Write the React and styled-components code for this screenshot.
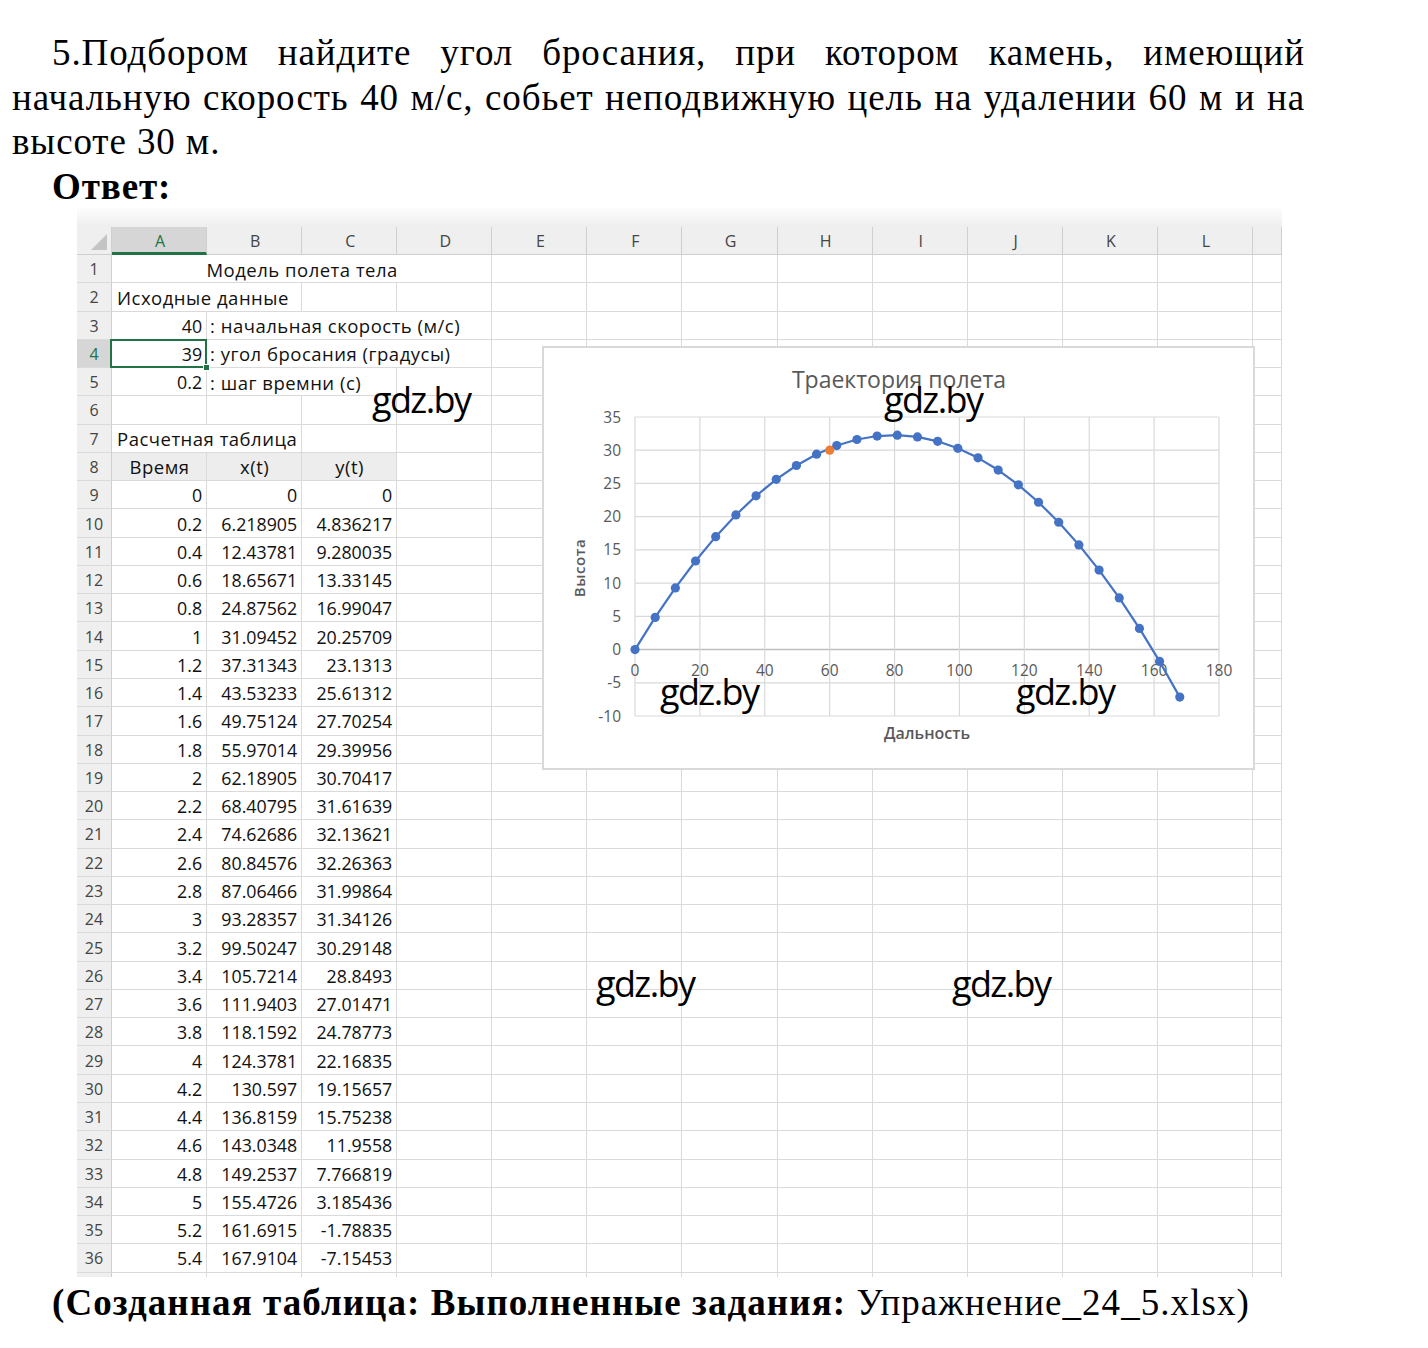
import React from "react";
import styled, { createGlobalStyle } from "styled-components";

const GlobalStyle = createGlobalStyle`
  body {
    margin: 0;
    background: #fff;
  }
`;

const DATA = [
  ["0", "0", "0"],
  ["0.2", "6.218905", "4.836217"],
  ["0.4", "12.43781", "9.280035"],
  ["0.6", "18.65671", "13.33145"],
  ["0.8", "24.87562", "16.99047"],
  ["1", "31.09452", "20.25709"],
  ["1.2", "37.31343", "23.1313"],
  ["1.4", "43.53233", "25.61312"],
  ["1.6", "49.75124", "27.70254"],
  ["1.8", "55.97014", "29.39956"],
  ["2", "62.18905", "30.70417"],
  ["2.2", "68.40795", "31.61639"],
  ["2.4", "74.62686", "32.13621"],
  ["2.6", "80.84576", "32.26363"],
  ["2.8", "87.06466", "31.99864"],
  ["3", "93.28357", "31.34126"],
  ["3.2", "99.50247", "30.29148"],
  ["3.4", "105.7214", "28.8493"],
  ["3.6", "111.9403", "27.01471"],
  ["3.8", "118.1592", "24.78773"],
  ["4", "124.3781", "22.16835"],
  ["4.2", "130.597", "19.15657"],
  ["4.4", "136.8159", "15.75238"],
  ["4.6", "143.0348", "11.9558"],
  ["4.8", "149.2537", "7.766819"],
  ["5", "155.4726", "3.185436"],
  ["5.2", "161.6915", "-1.78835"],
  ["5.4", "167.9104", "-7.15453"],
];

const LETTERS = ["A", "B", "C", "D", "E", "F", "G", "H", "I", "J", "K", "L", ""];

const TOP_ROWS = [
  [{ span: 4, text: "Модель полета тела", align: "center", words: true }],
  [{ span: 2, text: "Исходные данные", words: true }],
  [{ text: "40", align: "right" }, { span: 3, text: ": начальная скорость (м/с)", tight: true, words: true }],
  [{ text: "39", align: "right", selected: true }, { span: 3, text: ": угол бросания (градусы)", tight: true, words: true }],
  [{ text: "0.2", align: "right" }, { span: 2, text: ": шаг времни (с)", tight: true, words: true }],
  [],
  [{ span: 2, text: "Расчетная таблица", words: true }],
  [
    { text: "Время", align: "center", fill: true, words: true },
    { text: "x(t)", align: "center", fill: true, words: true },
    { text: "y(t)", align: "center", fill: true, words: true },
  ],
];

const ROWS = [
  ...TOP_ROWS,
  ...DATA.map((d) => d.map((v) => ({ text: v, align: "right" }))),
];

// watermark positions inside the sheet
const MARKS = [
  { left: 295, top: 181 },
  { left: 807, top: 181 },
  { left: 583, top: 473 },
  { left: 939, top: 473 },
  { left: 519, top: 765 },
  { left: 875, top: 765 },
];

const Page = styled.div`
  width: 1428px;
  min-height: 1348px;
  padding-top: 31px;
  box-sizing: border-box;
  font-family: "Liberation Serif", "Times New Roman", serif;
  color: #000;
`;

const Task = styled.div`
  width: 1293px;
  margin-left: 12px;
  font-size: 37px;
  line-height: 44.5px;
  letter-spacing: 0.9px;
`;

const Line = styled.div`
  text-align: ${(p) => (p.$justify ? "justify" : "left")};
  text-align-last: ${(p) => (p.$justify ? "justify" : "auto")};
  padding-left: ${(p) => (p.$indent ? "40px" : "0")};
`;

const Answer = styled.div`
  height: 43.5px;
  margin-left: 52px;
  font-size: 37px;
  line-height: 44.5px;
  letter-spacing: 0.9px;
  font-weight: bold;
`;

const SheetWrap = styled.div`
  position: relative;
  width: 1205px;
  margin-left: 77px;
`;

const Grid = styled.div`
  display: grid;
  grid-template-columns: 35px repeat(12, 95.08px) 29px;
  grid-template-rows: 19px 28px repeat(36, 28.28px) 4px;
  font-family: "Open Sans", "Liberation Sans", sans-serif;
  color: #111;
`;

const Band = styled.div`
  grid-column: 1 / -1;
  background: linear-gradient(#fdfdfd, #eeeeee);
`;

const Corner = styled.div`
  position: relative;
  background: #efefef;
  border-right: 1px solid #cfcfcf;
  border-bottom: 1px solid #cfcfcf;

  &::after {
    content: "";
    position: absolute;
    right: 4px;
    bottom: 4px;
    width: 16px;
    height: 16px;
    background: #c4c4c4;
    clip-path: polygon(100% 0, 100% 100%, 0 100%);
  }
`;

const ColHead = styled.div`
  display: flex;
  align-items: center;
  justify-content: center;
  background: ${(p) => (p.$active ? "#d6d6d6" : "#efefef")};
  border-right: 1px solid #cfcfcf;
  border-bottom: ${(p) => (p.$active ? "3px solid #217346" : "1px solid #cfcfcf")};
  color: ${(p) => (p.$active ? "#217346" : "#444")};
  font-size: 16px;
  padding: ${(p) => (p.$active ? "2px" : "0")} 0 0 2px;
`;

const RowHead = styled.div`
  display: flex;
  align-items: center;
  justify-content: center;
  background: ${(p) => (p.$active ? "#d6d6d6" : "#efefef")};
  border-right: 1px solid #cfcfcf;
  border-bottom: ${(p) => (p.$last ? "none" : "1px solid #dadada")};
  color: ${(p) => (p.$active ? "#217346" : "#444")};
  font-size: 16px;
  padding-top: 1px;
`;

const Cell = styled.div`
  position: relative;
  grid-column: span ${(p) => p.$span || 1};
  display: flex;
  align-items: center;
  justify-content: ${(p) =>
    p.$align === "right" ? "flex-end" : p.$align === "center" ? "center" : "flex-start"};
  padding: 1px ${(p) => (p.$tight ? "2px" : "4px")} 0 ${(p) => (p.$tight ? "3px" : "5px")};
  background: ${(p) => (p.$fill ? "#ededed" : "#fff")};
  border-right: 1px solid #dadada;
  border-bottom: ${(p) => (p.$last ? "none" : "1px solid #dadada")};
  font-size: ${(p) => (p.$words ? "18.5px" : "17.8px")};
  letter-spacing: ${(p) => (p.$words ? "0.5px" : "0")};
  white-space: nowrap;
  overflow: visible;
  z-index: ${(p) => (p.$selected ? 1 : 0)};

  ${(p) =>
    p.$selected &&
    `
    &::before {
      content: "";
      position: absolute;
      inset: -1px -1px -1px -2px;
      border: 2px solid #217346;
    }
    &::after {
      content: "";
      position: absolute;
      right: -4px;
      bottom: -4px;
      width: 5px;
      height: 5px;
      background: #217346;
      border: 1px solid #fff;
    }
  `}
`;

const ChartBox = styled.div`
  position: absolute;
  left: 465px;
  top: 138px;
  width: 713px;
  height: 424px;
  box-sizing: border-box;
  background: #fff;
  border: 2px solid #d9d9d9;
  z-index: 2;
`;

const Mark = styled.div`
  position: absolute;
  font-family: "Open Sans", "Liberation Sans", sans-serif;
  font-size: 36px;
  line-height: 22px;
  letter-spacing: -1.6px;
  color: #000;
  z-index: 3;
`;

const Footer = styled.div`
  margin: 4px 0 0 52px;
  font-size: 37px;
  line-height: 44.5px;
  letter-spacing: 1.06px;
`;

const Strong = styled.span`
  font-weight: bold;
`;

const X0 = 91;
const X1 = 675;
const YT = 69;
const YB = 368;
const sx = (x) => X0 + (x * (X1 - X0)) / 180;
const sy = (y) => YT + ((35 - y) * (YB - YT)) / 45;

function TrajectoryChart() {
  const pts = DATA.map(([, x, y]) => [sx(parseFloat(x)), sy(parseFloat(y))]);
  const yTicks = [35, 30, 25, 20, 15, 10, 5, 0, -5, -10];
  const xTicks = [0, 20, 40, 60, 80, 100, 120, 140, 160, 180];
  const font = "'Open Sans', 'Liberation Sans', sans-serif";

  return (
    <ChartBox>
      <svg width="709" height="420" viewBox="0 0 709 420">
        <text x="355" y="40" textAnchor="middle" fontFamily={font} fontSize="23" fill="#595959">
          Траектория полета
        </text>
        {yTicks.map((v) => (
          <line
            key={"h" + v}
            x1={X0}
            x2={X1}
            y1={sy(v)}
            y2={sy(v)}
            stroke={v === 0 ? "#bfbfbf" : "#d9d9d9"}
            strokeWidth={v === 0 ? 1.6 : 1.2}
          />
        ))}
        {xTicks.map((v) => (
          <line key={"v" + v} x1={sx(v)} x2={sx(v)} y1={YT} y2={YB} stroke="#d9d9d9" strokeWidth="1.2" />
        ))}
        {yTicks.map((v) => (
          <text key={"yl" + v} x="77" y={sy(v) + 5.5} textAnchor="end" fontFamily={font} fontSize="15.5" fill="#595959">
            {v}
          </text>
        ))}
        {xTicks.map((v) => (
          <text key={"xl" + v} x={sx(v)} y={sy(0) + 26.5} textAnchor="middle" fontFamily={font} fontSize="15.5" fill="#595959">
            {v}
          </text>
        ))}
        <text
          transform="translate(41 220) rotate(-90)"
          textAnchor="middle"
          fontFamily={font}
          fontSize="15"
          fontWeight="600"
          letterSpacing="0.6"
          fill="#595959"
        >
          Высота
        </text>
        <text x="383" y="391" textAnchor="middle" fontFamily={font} fontSize="16" fontWeight="600" fill="#595959">
          Дальность
        </text>
        <polyline
          points={pts.map((p) => p.join(",")).join(" ")}
          fill="none"
          stroke="#4472C4"
          strokeWidth="2.2"
          strokeLinejoin="round"
        />
        {pts.map(([x, y], i) => (
          <circle key={i} cx={x} cy={y} r="4.6" fill="#4472C4" />
        ))}
        <circle cx={sx(60)} cy={sy(30)} r="4.6" fill="#ED7D31" />
      </svg>
    </ChartBox>
  );
}

function SheetRow({ index, cells }) {
  const out = [];
  let used = 0;
  cells.forEach((c, i) => {
    out.push(
      <Cell
        key={i}
        $span={c.span}
        $align={c.align}
        $fill={c.fill}
        $tight={c.tight}
        $words={c.words}
        $selected={c.selected}
      >
        {c.text}
      </Cell>
    );
    used += c.span || 1;
  });
  for (let k = used; k < 13; k++) out.push(<Cell key={"e" + k} />);
  return (
    <>
      <RowHead $active={index === 4}>{index}</RowHead>
      {out}
    </>
  );
}

export default function App() {
  return (
    <Page>
      <GlobalStyle />
      <Task>
        <Line $justify $indent>
          5.Подбором найдите угол бросания, при котором камень, имеющий
        </Line>
        <Line $justify>
          начальную скорость 40 м/с, собьет неподвижную цель на удалении 60 м и на
        </Line>
        <Line>высоте 30 м.</Line>
      </Task>
      <Answer>Ответ:</Answer>

      <SheetWrap>
        <Grid>
          <Band />
          <Corner />
          {LETTERS.map((l, i) => (
            <ColHead key={i} $active={l === "A"}>
              {l}
            </ColHead>
          ))}
          {ROWS.map((cells, i) => (
            <SheetRow key={i} index={i + 1} cells={cells} />
          ))}
          <RowHead $last />
          {LETTERS.map((l, i) => (
            <Cell key={"p" + i} $last />
          ))}
        </Grid>
        <TrajectoryChart />
        {MARKS.map((m, i) => (
          <Mark key={i} style={{ left: m.left, top: m.top }}>
            gdz.by
          </Mark>
        ))}
      </SheetWrap>

      <Footer>
        <Strong>(Созданная таблица: Выполненные задания:</Strong> Упражнение_24_5.xlsx)
      </Footer>
    </Page>
  );
}
